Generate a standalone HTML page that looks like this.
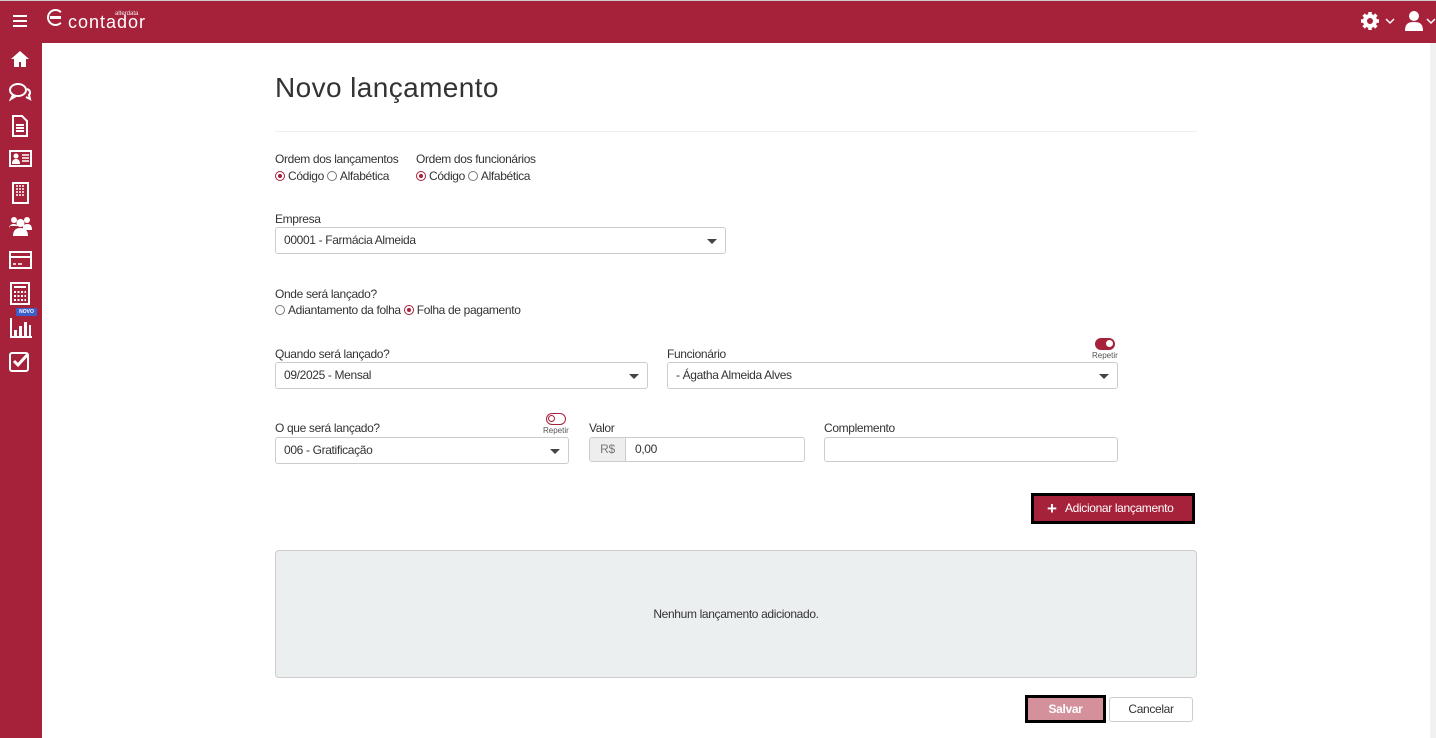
<!DOCTYPE html>
<html><head><meta charset="utf-8"><style>
*{box-sizing:border-box;margin:0;padding:0}
body{width:1436px;height:738px;overflow:hidden;background:#fff;font-family:"Liberation Sans",Arial,sans-serif;font-size:12px;letter-spacing:-0.35px;color:#333;position:relative}
.a{position:absolute}
.hdr{left:0;top:0;width:1436px;height:43px;background:#a6213a;border-top:1px solid #ccc}
.side{left:0;top:43px;width:42px;height:695px;background:#a6213a}
.sb{left:1430px;top:43px;width:6px;height:695px;background:#f1f1f1}
.lbl{font-size:12px;color:#333}
.sel{border:1px solid #ccc;border-radius:3px;background:#fff;height:27px;padding-left:8px;line-height:25px;font-size:12px;color:#333}
.sel:after{content:"";position:absolute;right:8px;top:11px;border-left:5px solid transparent;border-right:5px solid transparent;border-top:5px solid #444}
.rad{display:inline-block;width:10px;height:10px;border:1px solid #777;border-radius:50%;vertical-align:-1px;margin-right:3px;position:relative}
.rad.on{border-color:#a6213a}
.rad.on:after{content:"";position:absolute;left:2px;top:2px;width:4px;height:4px;border-radius:50%;background:#a6213a}
.tg{width:20px;height:12px;border-radius:6px;border:1.5px solid #a6213a}
.rep{font-size:8px;color:#555;letter-spacing:0}
</style></head><body>
<div class="a hdr"></div>
<div class="a" style="left:13px;top:15px;width:14px;height:2px;background:#fff;box-shadow:0 5px 0 #fff,0 10px 0 #fff"></div>
<div class="a" style="left:47px;top:9px;width:17px;height:17px;border:2.5px solid #fff;border-radius:50%;border-right-color:transparent"></div>
<div class="a" style="left:50px;top:16px;width:11px;height:2.5px;background:#fff"></div>
<div class="a" style="left:68px;top:12px;color:#fff;font-size:18px;line-height:20px;letter-spacing:1px">contador</div>
<div class="a" style="left:115px;top:11px;color:#eee;font-size:6px;letter-spacing:0">alterdata</div>
<svg class="a" style="left:1359px;top:11px" width="22" height="20" viewBox="0 0 20 20"><circle cx="10" cy="10" r="7" fill="#fff"/><g stroke="#fff" stroke-width="3.5"><line x1="10" y1="1" x2="10" y2="19"/><line x1="1" y1="10" x2="19" y2="10"/><line x1="3.6" y1="3.6" x2="16.4" y2="16.4"/><line x1="16.4" y1="3.6" x2="3.6" y2="16.4"/></g><circle cx="10" cy="10" r="3" fill="#a6213a"/></svg>
<svg class="a" style="left:1385px;top:18px" width="10" height="7"><path d="M1 1l4 4 4-4" stroke="#fff" stroke-width="1.5" fill="none"/></svg>
<svg class="a" style="left:1405px;top:10px" width="18" height="21"><circle cx="9" cy="6" r="5" fill="#fff"/><path d="M0 21c0-7 3-9 9-9s9 2 9 9z" fill="#fff"/></svg>
<svg class="a" style="left:1426px;top:18px" width="10" height="7"><path d="M1 1l4 4 4-4" stroke="#fff" stroke-width="1.5" fill="none"/></svg>
<div class="a side"></div>
<svg class="a" style="left:9px;top:48px" width="24" height="330" fill="#fff" stroke="#fff">
<path d="M2 11L11 3l9 8h-3v8h-5v-5h-2v5H5v-8z" stroke="none"/>
<g transform="translate(0,33)" fill="none" stroke-width="2"><ellipse cx="9" cy="9" rx="8" ry="6"/><path d="M4 14l-2 4 5-3"/><path d="M18 8c3 1 4 4 2 6l1 4-4-2"/></g>
<g transform="translate(0,66)" fill="none" stroke-width="2"><path d="M4 2h9l5 5v15H4z"/><path d="M7 11h8M7 14h8M7 17h8" /></g>
<g transform="translate(0,100)"><rect x="1" y="3" width="21" height="15" fill="none" stroke-width="2"/><circle cx="7" cy="8" r="2.5" stroke="none"/><path d="M3 16c0-4 2-5 4-5s4 1 4 5z" stroke="none"/><path d="M13 7h7M13 10h7M13 13h7" stroke-width="1.5"/></g>
<g transform="translate(0,134)"><rect x="4" y="1" width="15" height="20" fill="none" stroke-width="2"/><path d="M7 4h9M7 7h9M7 10h9M7 13h9" stroke-width="1.5" stroke-dasharray="2 1"/></g>
<g transform="translate(0,167)" stroke="none"><circle cx="5" cy="5" r="3"/><circle cx="18" cy="5" r="3"/><circle cx="11.5" cy="8" r="4"/><path d="M0 15c0-5 2-6 5-6s4 2 4 2H0zM14 11s1-2 4-2 5 1 5 6h-9z"/><path d="M4 21c0-6 3-8 7.5-8s7.5 2 7.5 8z"/></g>
<g transform="translate(0,201)" fill="none" stroke-width="2"><rect x="1" y="3" width="21" height="16"/><path d="M1 8h21"/><path d="M4 15h3M9 15h4" stroke-width="1.5"/></g>
<g transform="translate(0,234)"><rect x="2" y="1" width="18" height="21" fill="none" stroke-width="2"/><path d="M5 5h12" stroke-width="2"/><path d="M5 10h12M5 14h12M5 18h12" stroke-width="2" stroke-dasharray="2 1.5"/></g>
<g transform="translate(0,268)" stroke="none"><path d="M1 2h2v18h20v2H1z"/><rect x="5" y="14" width="3" height="6"/><rect x="10" y="10" width="3" height="10"/><rect x="15" y="6" width="3" height="14"/><rect x="20" y="9" width="2" height="11"/></g>
<g transform="translate(0,302)"><rect x="1" y="3" width="18" height="18" rx="2" fill="none" stroke-width="2"/><path d="M5 11l4 4 10-11" fill="none" stroke-width="3"/></g>
</svg>
<div class="a" style="left:16px;top:308px;width:21px;height:8px;background:#3a5ecc;color:#fff;font-size:5px;font-weight:bold;text-align:center;line-height:8px;border-radius:1px;letter-spacing:0">NOVO</div>
<div class="a sb"></div>

<div class="a" style="left:275px;top:72px;font-size:28px;color:#333;letter-spacing:0.4px">Novo lançamento</div>
<div class="a" style="left:275px;top:131px;width:922px;height:1px;background:#eee"></div>

<div class="a lbl" style="left:275px;top:152px">Ordem dos lançamentos</div>
<div class="a lbl" style="left:275px;top:169px"><span class="rad on"></span>Código <span class="rad"></span>Alfabética</div>
<div class="a lbl" style="left:416px;top:152px">Ordem dos funcionários</div>
<div class="a lbl" style="left:416px;top:169px"><span class="rad on"></span>Código <span class="rad"></span>Alfabética</div>

<div class="a lbl" style="left:275px;top:212px">Empresa</div>
<div class="a sel" style="left:275px;top:227px;width:451px">00001 - Farmácia Almeida</div>

<div class="a lbl" style="left:275px;top:287px">Onde será lançado?</div>
<div class="a lbl" style="left:275px;top:303px"><span class="rad"></span>Adiantamento da folha <span class="rad on"></span>Folha de pagamento</div>

<div class="a lbl" style="left:275px;top:347px">Quando será lançado?</div>
<div class="a sel" style="left:275px;top:362px;width:373px">09/2025 - Mensal</div>
<div class="a lbl" style="left:667px;top:347px">Funcionário</div>
<div class="a tg" style="left:1095px;top:338px;background:#a6213a"><div style="position:absolute;right:1px;top:1px;width:7px;height:7px;border-radius:50%;background:#fff"></div></div>
<div class="a rep" style="left:1092px;top:351px">Repetir</div>
<div class="a sel" style="left:667px;top:362px;width:451px">- Ágatha Almeida Alves</div>

<div class="a lbl" style="left:275px;top:421px">O que será lançado?</div>
<div class="a tg" style="left:546px;top:413px"><div style="position:absolute;left:1px;top:1px;width:7px;height:7px;border-radius:50%;border:1px solid #a6213a"></div></div>
<div class="a rep" style="left:543px;top:426px">Repetir</div>
<div class="a sel" style="left:275px;top:437px;width:294px">006 - Gratificação</div>
<div class="a lbl" style="left:589px;top:421px">Valor</div>
<div class="a" style="left:589px;top:437px;width:216px;height:25px;border:1px solid #ccc;border-radius:3px;overflow:hidden"><div style="position:absolute;left:0;top:0;width:36px;height:23px;background:#eee;border-right:1px solid #ccc;color:#777;text-align:center;line-height:23px">R$</div><div style="position:absolute;left:45px;top:0;line-height:23px">0,00</div></div>
<div class="a lbl" style="left:824px;top:421px">Complemento</div>
<div class="a" style="left:824px;top:437px;width:294px;height:25px;border:1px solid #ccc;border-radius:3px"></div>

<div class="a" style="left:1031px;top:493px;width:164px;height:31px;border:3px solid #000;background:#a6213a;color:#fff;line-height:25px;font-size:12px"><span style="position:absolute;left:13px;font-size:17px;font-weight:bold">+</span><span style="position:absolute;left:31px">Adicionar lançamento</span></div>

<div class="a" style="left:275px;top:550px;width:922px;height:128px;background:#eceff0;border:1px solid #ccc;border-radius:4px;text-align:center;line-height:126px">Nenhum lançamento adicionado.</div>

<div class="a" style="left:1025px;top:695px;width:81px;height:28px;border:3px solid #000;background:#d4919b;color:#fff;text-align:center;line-height:22px;font-weight:bold">Salvar</div>
<div class="a" style="left:1109px;top:697px;width:84px;height:25px;border:1px solid #ccc;border-radius:3px;text-align:center;line-height:23px">Cancelar</div>
</body></html>
